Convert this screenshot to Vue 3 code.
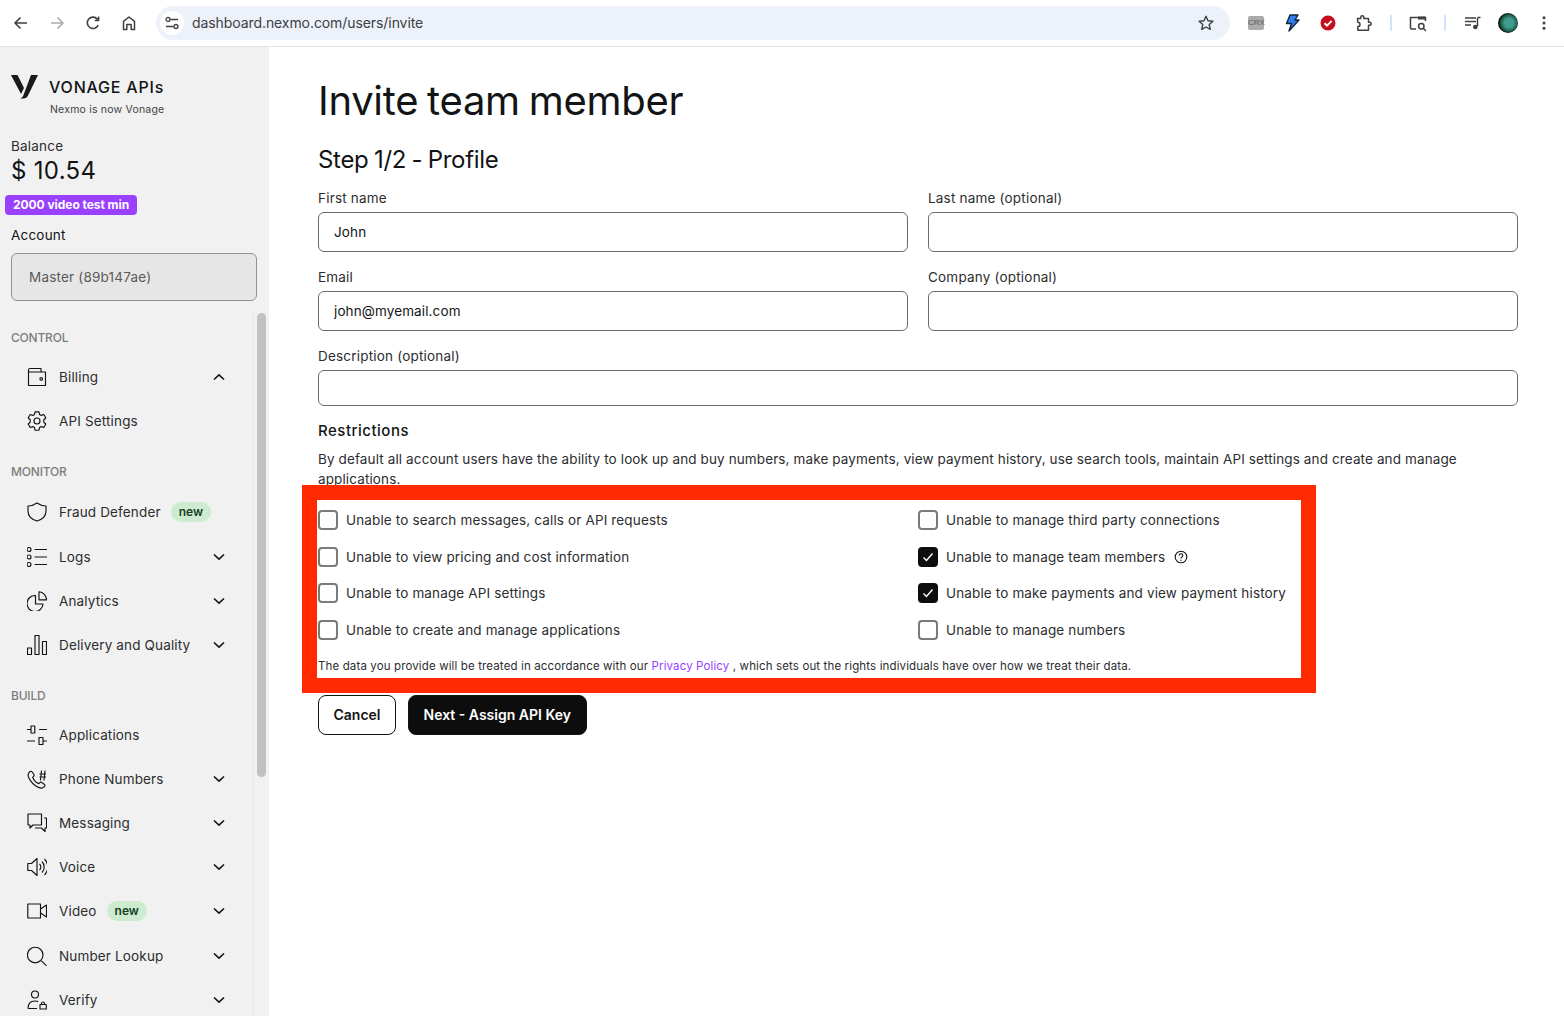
<template>
  <div class="browser">
    <header class="toolbar">
      <button class="tool">
        <svg width="20" height="20" viewBox="0 0 20 20"><path d="M16 10H4.5M9.5 4.5 4 10l5.5 5.5" class="ic" stroke-width="1.6" /></svg>
      </button>
      <button class="tool">
        <svg width="20" height="20" viewBox="0 0 20 20"><path d="M4 10h11.5M10.500 4.500 16 10l-5.500 5.500" class="ic faded" stroke-width="1.6" /></svg>
      </button>
      <button class="tool">
        <svg width="20" height="20" viewBox="0 0 20 20"><path d="M15.200 12.200A5.700 5.700 0 1 1 14.300 6L15.600 7.400M15.600 3.600v3.900h-3.900" class="ic" stroke-width="1.6" /></svg>
      </button>
      <button class="tool">
        <svg width="20" height="20" viewBox="0 0 20 20"><path d="M4.500 16.500V8.400L10 4l5.500 4.400v8.100h-3.300v-5H7.800v5z" class="ic" stroke-width="1.5" /></svg>
      </button>
      <div class="omnibox">
        <span class="site-info">
          <svg width="16" height="16" viewBox="0 0 16 16">
            <path d="M6.500 4.500H14M2 11.500h7.500" class="ic" stroke-width="1.3" />
            <circle cx="4" cy="4.500" r="2" class="ic" stroke-width="1.3" />
            <circle cx="12" cy="11.500" r="2" class="ic" stroke-width="1.3" />
          </svg>
        </span>
        <span class="url">dashboard.nexmo.com/users/invite</span>
        <svg class="star" width="18" height="18" viewBox="0 0 18 18"><path d="m9 2.300 2 4.500 4.900.5-3.700 3.300 1.100 4.800L9 13l-4.300 2.400 1.100-4.800L2.100 7.300 7 6.800z" class="ic" stroke-width="1.4" /></svg>
      </div>
      <div class="extensions">
        <button class="tool"><span class="crx">CRX</span></button>
        <button class="tool">
          <svg width="18" height="20" viewBox="0 0 18 20"><path d="M7 2h8l-3 5h4L6 18l2.500-7.500H3.500z" fill="#2f80ed" stroke="#14233a" stroke-width="1.4" stroke-linejoin="round" /></svg>
        </button>
        <button class="tool">
          <svg width="18" height="18" viewBox="0 0 18 18">
            <circle cx="9" cy="9" r="7.500" fill="#c50f1f" />
            <path d="m5.500 9.300 2.500 2.300 4.700-4.700" fill="none" stroke="#fff" stroke-width="2" />
          </svg>
        </button>
        <button class="tool">
          <svg width="20" height="20" viewBox="0 0 20 20"><path d="M3.500 5.500h3.300V4.200a1.500 1.500 0 0 1 3 0v1.300h4.700v3.700h1.200a1.500 1.500 0 0 1 0 3h-1.200v5H3.800v-3.600a1.800 1.800 0 0 0 0-4.400z" class="ic" stroke-width="1.5" /></svg>
        </button>
        <span class="divider"></span>
        <button class="tool">
          <svg width="20" height="20" viewBox="0 0 20 20">
            <path d="M8 16H3.500a1 1 0 0 1-1-1V4.500h15V8" class="ic" stroke-width="1.5" />
            <path d="M10 3.500h7.500v3H10z" fill="#3c4043" />
            <circle cx="13.300" cy="13.300" r="2.700" class="ic" stroke-width="1.5" />
            <path d="m15.300 15.300 2.700 2.700" class="ic" stroke-width="1.5" />
          </svg>
        </button>
        <span class="divider"></span>
        <button class="tool">
          <svg width="20" height="20" viewBox="0 0 20 20">
            <path d="M3 5h11M3 8.500h11M3 12h6M15.500 5v8.500" class="ic" stroke-width="1.5" />
            <circle cx="13.300" cy="14" r="2.300" fill="#3c4043" />
            <path d="M15.500 4.500h3" class="ic" stroke-width="1.5" />
          </svg>
        </button>
        <button class="tool"><span class="avatar"></span></button>
        <button class="tool">
          <svg width="16" height="16" viewBox="0 0 16 16" fill="#3c4043">
            <circle cx="8" cy="2.800" r="1.500" /><circle cx="8" cy="8" r="1.500" /><circle cx="8" cy="13.200" r="1.500" />
          </svg>
        </button>
      </div>
    </header>

    <div class="page">
      <aside class="sidebar">
        <div class="brand">
          <svg class="logo" width="27" height="25" viewBox="0 0 27 25" fill="#1a1a1a">
            <path d="M0 1h6.500L13 14l-3 6z" />
            <path d="M20 1h7l-9.500 19.500C16 23.500 14.500 24.500 12.500 24.500H8.500c2 0 3-1.500 4-3.500z" />
          </svg>
          <div class="brand-text">
            <div class="brand-name">VONAGE APIs</div>
            <div class="brand-sub">Nexmo is now Vonage</div>
          </div>
        </div>

        <div class="balance-label">Balance</div>
        <div class="balance">$ 10.54</div>
        <span class="promo">2000 video test min</span>
        <div class="account-label">Account</div>
        <div class="account">Master (89b147ae)</div>

        <div class="nav-wrap">
          <nav class="nav">
            <template v-for="section in sections" :key="section.title">
              <div class="section-title" :class="{ roomy: section.title === 'MONITOR' }">{{ section.title }}</div>
              <a v-for="item in section.items" :key="item.label" class="nav-item">
                <svg class="nav-icon" width="20" height="20" viewBox="0 0 20 20">
                  <path v-for="(d, i) in icons[item.icon]" :key="i" :d="d" class="ic dark" stroke-width="1.15" />
                </svg>
                <span>{{ item.label }}</span>
                <span v-if="item.isNew" class="new">new</span>
                <svg v-if="item.caret" class="caret" width="12" height="8" viewBox="0 0 12 8">
                  <path :d="item.caret === 'up' ? 'M1 6.500 6 1.800l5 4.700' : 'M1 1.500 6 6.200l5-4.700'" class="ic dark" stroke-width="1.6" />
                </svg>
              </a>
            </template>
          </nav>
          <div class="scrollbar"><div class="thumb"></div></div>
        </div>
      </aside>

      <main class="content">
        <h1>Invite team member</h1>
        <h2>Step 1/2 - Profile</h2>

        <div class="fields">
          <label class="field">
            <span>First name</span>
            <input value="John" />
          </label>
          <label class="field">
            <span>Last name (optional)</span>
            <input />
          </label>
          <label class="field">
            <span>Email</span>
            <input value="john@myemail.com" />
          </label>
          <label class="field">
            <span>Company (optional)</span>
            <input />
          </label>
          <label class="field wide">
            <span>Description (optional)</span>
            <input class="short" />
          </label>
        </div>

        <h3>Restrictions</h3>
        <p class="intro">
          By default all account users have the ability to look up and buy numbers, make payments, view payment history, use search tools, maintain API settings and create and manage applications.
        </p>

        <section class="highlight">
          <div class="checks">
            <div v-for="check in checks" :key="check.label" class="check">
              <span class="box" :class="{ on: check.on }">
                <svg v-if="check.on" width="12" height="12" viewBox="0 0 12 12"><path d="m1.500 6.500 3 3 6-7" fill="none" stroke="#fff" stroke-width="1.4" /></svg>
              </span>
              <span>{{ check.label }}</span>
              <svg v-if="check.help" class="help" width="14" height="14" viewBox="0 0 14 14">
                <circle cx="7" cy="7" r="5.800" class="ic dark" stroke-width="1.1" />
                <path d="M5.200 5.500a1.800 1.800 0 1 1 2.700 1.600c-.6.300-.9.700-.9 1.300" class="ic dark" stroke-width="1.1" />
                <circle cx="7" cy="10.300" r=".7" fill="#131415" />
              </svg>
            </div>
          </div>
          <p class="privacy">The data you provide will be treated in accordance with our <a>Privacy Policy</a> , which sets out the rights individuals have over how we treat their data.</p>
        </section>

        <div class="actions">
          <button class="btn ghost">Cancel</button>
          <button class="btn solid">Next - Assign API Key</button>
        </div>
      </main>
    </div>
  </div>
</template>

<script setup>
const icons = {
  wallet: ['M1.500 4.500V3a1.500 1.500 0 0 1 1.500-1.500h11V5', 'M1.500 4a1 1 0 0 0 1 1h16v13.500h-17z', 'M15.500 11.800a1.300 1.300 0 1 1-2.600 0 1.300 1.300 0 0 1 2.600 0z'],
  gear: ['M8 .8h4l.5 2.600 1.800 1 2.500-.9 2 3.500-2 1.700v2.600l2 1.700-2 3.500-2.500-.9-1.800 1-.5 2.600H8l-.5-2.600-1.800-1-2.500.9-2-3.500 2-1.700V8.700l-2-1.700 2-3.500 2.500.9 1.800-1z', 'M13 10a3 3 0 1 1-6 0 3 3 0 0 1 6 0z'],
  shield: ['M10 1c2.500 1.800 5.500 2.800 9 3v5c0 5-4 8.500-9 10-5-1.500-9-5-9-10V4c3.500-.2 6.500-1.200 9-3z'],
  list: ['M7.500 2.500h12.500M7.500 10h12.500M7.500 17.500h12.500', 'M4 2.500a2 2 0 1 1-4 0 2 2 0 0 1 4 0z', 'M4 10a2 2 0 1 1-4 0 2 2 0 0 1 4 0z', 'M4 17.500a2 2 0 1 1-4 0 2 2 0 0 1 4 0z'],
  pie: ['M8.500 4.500A8 8 0 1 0 16 13H8.500z', 'M12 .8a8 8 0 0 1 7.500 8H12z'],
  bars: ['M.5 13h4v6.500h-4z', 'M8 .5h4v19H8z', 'M15.500 6.500h4v13h-4z'],
  sliders: ['M0 4.500h4M12 4.500h8M4 1h3.800v7H4z', 'M0 16h8M16 16h4M12 12.500h4v7h-4z'],
  phone: ['M2.500 3c1-1 2-1 2.700 0l1.700 2.500c.4.700.3 1.300-.3 1.900l-1 1c1 2.500 3.200 5 6 6.300l1.100-1c.600-.6 1.300-.7 2-.2l2.500 1.700c1 .7 1 1.700.200 2.500-1.200 1.300-2.800 1.800-4.500 1.200C7.500 17 3.500 13 1.500 8 .8 6 1.200 4.300 2.500 3z', 'M12.500 5h6.500M12.500 8h6.500M14.500 1.500l-1 10M18 1.500l-1 10'],
  chat: ['M1 1h13.500v11H6l-3 3v-3H1z', 'M17 5h2.500v10H18v3.500L14.500 15H8'],
  voice: ['M.8 6.500h3.700L10 1.500v17l-5.500-5H.8z', 'M12.500 7a4 4 0 0 1 0 6M15 4.500a8 8 0 0 1 0 11M17.500 2a11.500 11.500 0 0 1 0 16'],
  video: ['M.8 3h12.700v14H.8z', 'M13.500 8 19.500 4v12l-6-4'],
  search: ['M16 9a7.800 7.800 0 1 1-15.600 0 7.800 7.800 0 0 1 15.600 0z', 'M14.500 14.800l5 5'],
  verify: ['M11.500 4.500a3.500 3.500 0 1 1-7 0 3.500 3.500 0 0 1 7 0z', 'M1 18.500C1 13.500 4 11 8 11c1.200 0 2.300.2 3.200.6M1 18.500h9', 'M13 14.500h6.300v4.500H13z', 'M14.500 14.500v-1a1.500 1.500 0 0 1 3 0v1']
}

const sections = [
  {
    title: 'CONTROL',
    items: [
      { label: 'Billing', icon: 'wallet', caret: 'up' },
      { label: 'API Settings', icon: 'gear' }
    ]
  },
  {
    title: 'MONITOR',
    items: [
      { label: 'Fraud Defender', icon: 'shield', isNew: true },
      { label: 'Logs', icon: 'list', caret: 'down' },
      { label: 'Analytics', icon: 'pie', caret: 'down' },
      { label: 'Delivery and Quality', icon: 'bars', caret: 'down' }
    ]
  },
  {
    title: 'BUILD',
    items: [
      { label: 'Applications', icon: 'sliders' },
      { label: 'Phone Numbers', icon: 'phone', caret: 'down' },
      { label: 'Messaging', icon: 'chat', caret: 'down' },
      { label: 'Voice', icon: 'voice', caret: 'down' },
      { label: 'Video', icon: 'video', isNew: true, caret: 'down' },
      { label: 'Number Lookup', icon: 'search', caret: 'down' },
      { label: 'Verify', icon: 'verify', caret: 'down' }
    ]
  }
]

const checks = [
  { label: 'Unable to search messages, calls or API requests' },
  { label: 'Unable to manage third party connections' },
  { label: 'Unable to view pricing and cost information' },
  { label: 'Unable to manage team members', on: true, help: true },
  { label: 'Unable to manage API settings' },
  { label: 'Unable to make payments and view payment history', on: true },
  { label: 'Unable to create and manage applications' },
  { label: 'Unable to manage numbers' }
]
</script>

<style>
html, body {
  margin: 0;
  overflow: hidden;
  background: #fff;
}
</style>

<style scoped>
.browser {
  height: 1016px;
  display: flex;
  flex-direction: column;
  font-family: Inter, "Liberation Sans", sans-serif;
  color: #131415;
  overflow: hidden;
}

.ic {
  fill: none;
  stroke: #3c4043;
  stroke-linejoin: round;
}
.ic.faded {
  stroke: #a8abaf;
}
.ic.dark {
  stroke: #131415;
}

.toolbar {
  height: 46px;
  flex: none;
  display: flex;
  align-items: center;
  padding-left: 3px;
  border-bottom: 1px solid #e1e3e6;
}
.tool {
  width: 36px;
  height: 36px;
  flex: none;
  padding: 0;
  border: none;
  background: none;
  display: flex;
  align-items: center;
  justify-content: center;
}
.omnibox {
  width: 1074px;
  height: 34px;
  margin-left: 9px;
  flex: none;
  display: flex;
  align-items: center;
  border-radius: 17px;
  background: #ecf1fa;
  padding: 0 15px 0 4px;
  box-sizing: border-box;
}
.site-info {
  width: 24px;
  height: 24px;
  border-radius: 50%;
  background: #fff;
  display: flex;
  align-items: center;
  justify-content: center;
}
.url {
  margin: 0 0 1px 8px;
  font-size: 14px;
  color: #3c4043;
  letter-spacing: -0.08px;
}
.star {
  margin-left: auto;
}
.extensions {
  display: flex;
  align-items: center;
  margin-left: 8px;
}
.crx {
  width: 16px;
  height: 14px;
  border-radius: 2px;
  background: #ababab;
  color: #5c5c5c;
  font-size: 8px;
  line-height: 14px;
  text-align: center;
}
.divider {
  width: 2px;
  height: 16px;
  margin: 0 8px;
  background: #d3e3fd;
}
.avatar {
  width: 20px;
  height: 20px;
  border-radius: 50%;
  background: radial-gradient(circle at 55% 50%, #3f9c8c 0 30%, #1c5c4c 55%, #0a140e 68%);
}

.page {
  flex: 1;
  display: flex;
  min-height: 0;
}

.sidebar {
  width: 269px;
  flex: none;
  display: flex;
  flex-direction: column;
  align-items: flex-start;
  background: #f1f1f1;
  overflow: hidden;
}
.brand {
  display: flex;
  align-items: flex-start;
  padding: 26px 0 0 11px;
  height: 90px;
  box-sizing: border-box;
}
.logo {
  margin-top: 1px;
}
.brand-text {
  margin-left: 11px;
}
.brand-name {
  font-size: 16px;
  line-height: 24px;
  margin-top: 2px;
  font-weight: 500;
  letter-spacing: 0.8px;
}
.brand-sub {
  font-size: 10.5px;
  line-height: 14px;
  margin: 4px 0 0 1px;
  color: #3e4246;
  letter-spacing: 0.2px;
}
.balance-label {
  margin-left: 11px;
  font-size: 13.5px;
  line-height: 18px;
  color: #2c2d2f;
  letter-spacing: 0.2px;
}
.balance {
  margin: 1px 0 0 11px;
  font-size: 24px;
  line-height: 30px;
  letter-spacing: 0.3px;
}
.promo {
  margin: 9px 0 0 5px;
  height: 20px;
  padding: 0 8px;
  border-radius: 4px;
  background: #9941ff;
  color: #fff;
  font-size: 12px;
  line-height: 20px;
  font-weight: 700;
  letter-spacing: -0.05px;
}
.account-label {
  margin: 8px 0 0 11px;
  font-size: 13.5px;
  line-height: 24px;
  letter-spacing: 0.2px;
}
.account {
  margin: 6px 0 0 11px;
  width: 246px;
  height: 48px;
  box-sizing: border-box;
  padding-left: 17px;
  border: 1px solid #919191;
  border-radius: 6px;
  background: #e6e6e6;
  color: #5a5a5a;
  font-size: 13.5px;
  line-height: 46px;
  letter-spacing: 0.2px;
}

.nav-wrap {
  flex: 1;
  width: 100%;
  min-height: 0;
  margin-top: 10px;
  display: flex;
  overflow: hidden;
}
.nav {
  width: 254px;
  flex: none;
  box-sizing: border-box;
  border-right: 1px solid #e8e8e8;
}
.section-title {
  margin-left: 11px;
  font-size: 12px;
  line-height: 16px;
  height: 16px;
  font-weight: 500;
  color: #7d7d7d;
  letter-spacing: -0.2px;
  padding-top: 19px;
}
.nav-item + .section-title {
  padding-top: 21px;
}
.nav-item {
  height: 44.2px;
  display: flex;
  align-items: center;
  padding-left: 27px;
  font-size: 13.5px;
  letter-spacing: 0.15px;
  color: #2c2d2f;
}
.section-title + .nav-item {
  margin-top: 8.5px;
}
.section-title.roomy + .nav-item {
  margin-top: 10.5px;
}
.nav-icon {
  margin-right: 12px;
  flex: none;
}
.new {
  margin-left: 10px;
  padding: 0 8px;
  height: 20px;
  border-radius: 10px;
  background: #cdeccf;
  color: #14401f;
  font-size: 12px;
  line-height: 20px;
  font-weight: 600;
  letter-spacing: 0;
}
.caret {
  margin-left: auto;
  margin-right: 28px;
}
.scrollbar {
  width: 15px;
  flex: none;
  padding-left: 3px;
  box-sizing: border-box;
}
.thumb {
  width: 9px;
  height: 464px;
  margin-top: 2px;
  border-radius: 5px;
  background: #c1c1c1;
}

.content {
  flex: 1;
  min-width: 0;
  padding: 0 46px 0 49px;
}
h1 {
  margin: 28px 0 0;
  font-size: 40px;
  line-height: 52px;
  font-weight: 400;
  letter-spacing: -0.3px;
  word-spacing: -2px;
}
h2 {
  margin: 18px 0 0;
  font-size: 24px;
  line-height: 30px;
  font-weight: 400;
  letter-spacing: -0.3px;
  word-spacing: -1px;
}
.fields {
  margin-top: 13px;
  display: grid;
  grid-template-columns: 1fr 1fr;
  column-gap: 20px;
  row-gap: 15px;
}
.field {
  display: flex;
  flex-direction: column;
  font-size: 13.5px;
  line-height: 20px;
  letter-spacing: 0.2px;
  color: #2c2d2f;
}
.field span {
  height: 20px;
  margin-bottom: 4px;
}
.field.wide {
  grid-column: 1 / 3;
}
.field input {
  height: 40px;
  box-sizing: border-box;
  padding: 0 15px;
  border: 1px solid #6b6b6b;
  border-radius: 6px;
  outline: none;
  font: inherit;
  letter-spacing: 0.12px;
  color: #131415;
  background: #fff;
}
.field input.short {
  height: 36px;
}
h3 {
  margin: 15px 0 0;
  font-size: 15px;
  line-height: 20px;
  font-weight: 500;
  letter-spacing: 0.5px;
}
.intro {
  margin: 8px 0 0;
  font-size: 13.5px;
  line-height: 20px;
  letter-spacing: 0.12px;
  color: #2c2d2f;
}
.highlight {
  position: relative;
  width: 1014px;
  height: 208px;
  box-sizing: border-box;
  margin: -4px 0 0 -16px;
  padding-left: 1px;
  border: 15px solid #ff2a00;
  background: #fff;
}
.checks {
  display: grid;
  grid-template-columns: 600px 1fr;
  grid-template-rows: 37px 36px 37px 36px;
  padding-top: 1.5px;
}
.check {
  display: flex;
  align-items: center;
  font-size: 13.5px;
  letter-spacing: 0.14px;
  color: #2c2d2f;
  white-space: nowrap;
}
.box {
  width: 20px;
  height: 20px;
  box-sizing: border-box;
  margin-right: 8px;
  border: 2px solid #7a7a7a;
  border-radius: 4px;
  background: #fff;
  display: flex;
  align-items: center;
  justify-content: center;
}
.box.on {
  border-color: #0d0d0d;
  background: #0d0d0d;
}
.help {
  margin-left: 9px;
}
.privacy {
  margin: 10px 0 0;
  font-size: 11.5px;
  line-height: 16px;
  color: #2c2d2f;
  letter-spacing: 0.13px;
  white-space: nowrap;
}
.privacy a {
  color: #9941ff;
}
.actions {
  margin-top: 2px;
  display: flex;
  gap: 12px;
}
.btn {
  height: 40px;
  box-sizing: border-box;
  border-radius: 8px;
  border: 1px solid #131415;
  font-family: inherit;
  font-size: 14px;
  font-weight: 600;
  padding: 0 14.5px 1px;
}
.btn.ghost {
  background: #fff;
  color: #131415;
}
.btn.solid {
  background: #0d0d0d;
  color: #fff;
}
</style>
